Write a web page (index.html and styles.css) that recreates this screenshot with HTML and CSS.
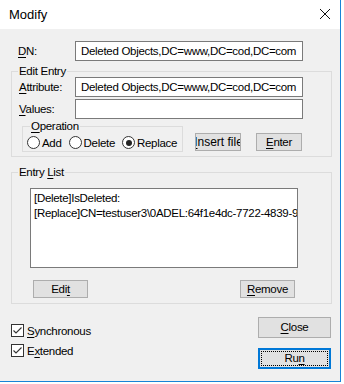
FILE: index.html
```html
<!DOCTYPE html>
<html lang="en">
<head>
    <meta charset="UTF-8">
    <title>Modify</title>
    <link rel="stylesheet" href="styles.css">
</head>
<body>
    <div class="window">
        <div class="titlebar">
            <span class="title">Modify</span>
            <svg class="close" width="12" height="12" viewBox="0 0 12 12">
                <path d="M1 1 L11 11 M11 1 L1 11" stroke="#111" stroke-width="1" fill="none"/>
            </svg>
        </div>

        <div class="content">
            <div class="row dn-row">
                <label><u>D</u>N:</label>
                <div class="field">Deleted Objects,DC=www,DC=cod,DC=com</div>
            </div>

            <fieldset class="group edit-entry">
                <legend>Edit Entry</legend>
                <div class="row">
                    <label><u>A</u>ttribute:</label>
                    <div class="field">Deleted Objects,DC=www,DC=cod,DC=com</div>
                </div>
                <div class="row values-row">
                    <label><u>V</u>alues:</label>
                    <div class="field"></div>
                </div>
                <div class="op-row">
                    <fieldset class="group operation">
                        <legend><u>O</u>peration</legend>
                        <div class="radios">
                            <span class="radio"><span class="dot"></span><span>Add</span></span>
                            <span class="radio"><span class="dot"></span><span>Delete</span></span>
                            <span class="radio checked"><span class="dot"></span><span>Replace</span></span>
                        </div>
                    </fieldset>
                    <button class="btn insert"><span class="focus"><u>I</u>nsert file</span></button>
                    <button class="btn enter"><u>E</u>nter</button>
                </div>
            </fieldset>

            <fieldset class="group entry-list">
                <legend>Entry <u>L</u>ist</legend>
                <div class="listbox">
                    <div>[Delete]IsDeleted:</div>
                    <div>[Replace]CN=testuser3\0ADEL:64f1e4dc-7722-4839-9a1d-55c1e0b2f3a7</div>
                </div>
                <div class="list-buttons">
                    <button class="btn small">Edi<u>t</u></button>
                    <button class="btn small"><u>R</u>emove</button>
                </div>
            </fieldset>

            <div class="footer">
                <div class="checks">
                    <span class="check">
                        <svg width="13" height="13" viewBox="0 0 13 13"><rect x="0.5" y="0.5" width="12" height="12" fill="#fff" stroke="#333"/><path d="M2.5 6.5 L5 9 L10.5 3.5" stroke="#333" stroke-width="1.1" fill="none"/></svg>
                        <span><u>S</u>ynchronous</span>
                    </span>
                    <span class="check">
                        <svg width="13" height="13" viewBox="0 0 13 13"><rect x="0.5" y="0.5" width="12" height="12" fill="#fff" stroke="#333"/><path d="M2.5 6.5 L5 9 L10.5 3.5" stroke="#333" stroke-width="1.1" fill="none"/></svg>
                        <span>E<u>x</u>tended</span>
                    </span>
                </div>
                <div class="actions">
                    <button class="btn wide"><u>C</u>lose</button>
                    <button class="btn wide default"><span class="focus">Ru<u>n</u></span></button>
                </div>
            </div>
        </div>
    </div>
</body>
</html>
```

FILE: styles.css
```css
:root {
    --fontFamily: "Liberation Sans", Arial, sans-serif;
    --colorFace: #f0f0f0;
    --colorGroup: #dcdcdc;
    --colorField: #7a7a7a;
    --colorButton: #e1e1e1;
    --colorButtonBorder: #adadad;
    --colorAccent: #1883d7;
}

body {
    margin: 0;
    background: #fff;
    font-family: var(--fontFamily);
    font-size: 11.5px;
    letter-spacing: -0.3px;
    color: #000;
}

u {
    text-decoration-thickness: 1px;
    text-underline-offset: 2px;
}

.window {
    width: 340px;
    height: 381px;
    background: var(--colorFace);
    border-right: 1px solid var(--colorAccent);
    border-bottom: 1px solid var(--colorAccent);
    display: flex;
    flex-direction: column;
}

.titlebar {
    height: 29px;
    background: #fff;
    display: flex;
    align-items: center;
    justify-content: space-between;
    padding: 0 9px 0 9px;
}

.title {
    font-size: 13px;
    letter-spacing: 0;
    margin-top: -1px;
}

.close {
    margin-top: -1px;
}

.content {
    padding: 12px 8px 0 11px;
}

.row {
    display: flex;
    align-items: center;
    height: 20px;
}

.row label {
    width: 56px;
}

.dn-row {
    padding-left: 7px;
}

.dn-row label {
    width: 57px;
}

.field {
    height: 18px;
    background: #fff;
    border: 1px solid var(--colorField);
    padding: 0 0 0 5px;
    box-sizing: content-box;
    width: 221px;
    line-height: 18px;
    white-space: nowrap;
    overflow: hidden;
}

.group {
    margin: 0;
    border: 1px solid var(--colorGroup);
    padding: 0 7px;
    min-width: 0;
    box-sizing: border-box;
}

.group legend {
    padding: 0 1px;
    margin-left: -1px;
    line-height: 14px;
}

.edit-entry {
    width: 321px;
    margin-top: 3px;
    padding-bottom: 4px;
}

.edit-entry .row {
    margin-top: -1px;
}

.values-row {
    margin-top: 2px !important;
}

.op-row {
    display: flex;
    align-items: flex-start;
}

.operation {
    width: 161px;
    margin-left: 3px;
    height: 33px;
    padding: 0 4px;
}

.operation legend {
    margin-left: 3px;
}

.radios {
    display: flex;
    gap: 7px;
    margin-top: 3px;
}

.radio {
    display: flex;
    align-items: center;
    gap: 2px;
}

.radio .dot {
    width: 11px;
    height: 11px;
    border: 1px solid #333;
    border-radius: 50%;
    background: #fff;
    position: relative;
}

.radio.checked .dot::after {
    content: '';
    position: absolute;
    left: 2.5px;
    top: 2.5px;
    width: 6px;
    height: 6px;
    border-radius: 50%;
    background: #222;
}

.btn {
    font-family: var(--fontFamily);
    font-size: 11.5px;
    letter-spacing: -0.3px;
    background: var(--colorButton);
    border: 1px solid var(--colorButtonBorder);
    color: #000;
    padding: 0;
    margin: 0;
    height: 18px;
    line-height: 16px;
    overflow: hidden;
    white-space: nowrap;
}

.insert {
    width: 46px;
    margin: 14px 0 0 12px;
    display: flex;
    justify-content: center;
    font-size: 12px;
    letter-spacing: 0;
}

.insert .focus {
    flex-shrink: 0;
    border-left: 1px dotted #000;
    padding: 0 1px;
}

.enter {
    width: 46px;
    margin: 14px 0 0 15px;
}

.entry-list {
    width: 321px;
    margin-top: 8px;
    padding-bottom: 5px;
}

.listbox {
    margin: 9px 0 0 11px;
    background: #fff;
    border: 1px solid var(--colorField);
    padding: 2px 0 0 3px;
    box-sizing: border-box;
    width: 268px;
    height: 80px;
    line-height: 15px;
    white-space: nowrap;
    overflow: hidden;
}

.list-buttons {
    display: flex;
    justify-content: space-between;
    margin: 12px 29px 0 14px;
}

.small {
    width: 55px;
}

.footer {
    display: flex;
    justify-content: space-between;
    margin-top: 13px;
}

.checks {
    display: flex;
    flex-direction: column;
    gap: 7px;
    padding-top: 7px;
}

.check {
    display: flex;
    align-items: center;
    gap: 3px;
    height: 13px;
}

.actions {
    display: flex;
    flex-direction: column;
    gap: 10px;
    margin-right: 1px;
}

.wide {
    width: 73px;
    height: 21px;
    line-height: 19px;
}

.default {
    border: 2px solid #0078d7;
    padding: 1px;
    display: flex;
}

.default .focus {
    flex: 1;
    border: 1px dotted #000;
    line-height: 13px;
}
```
